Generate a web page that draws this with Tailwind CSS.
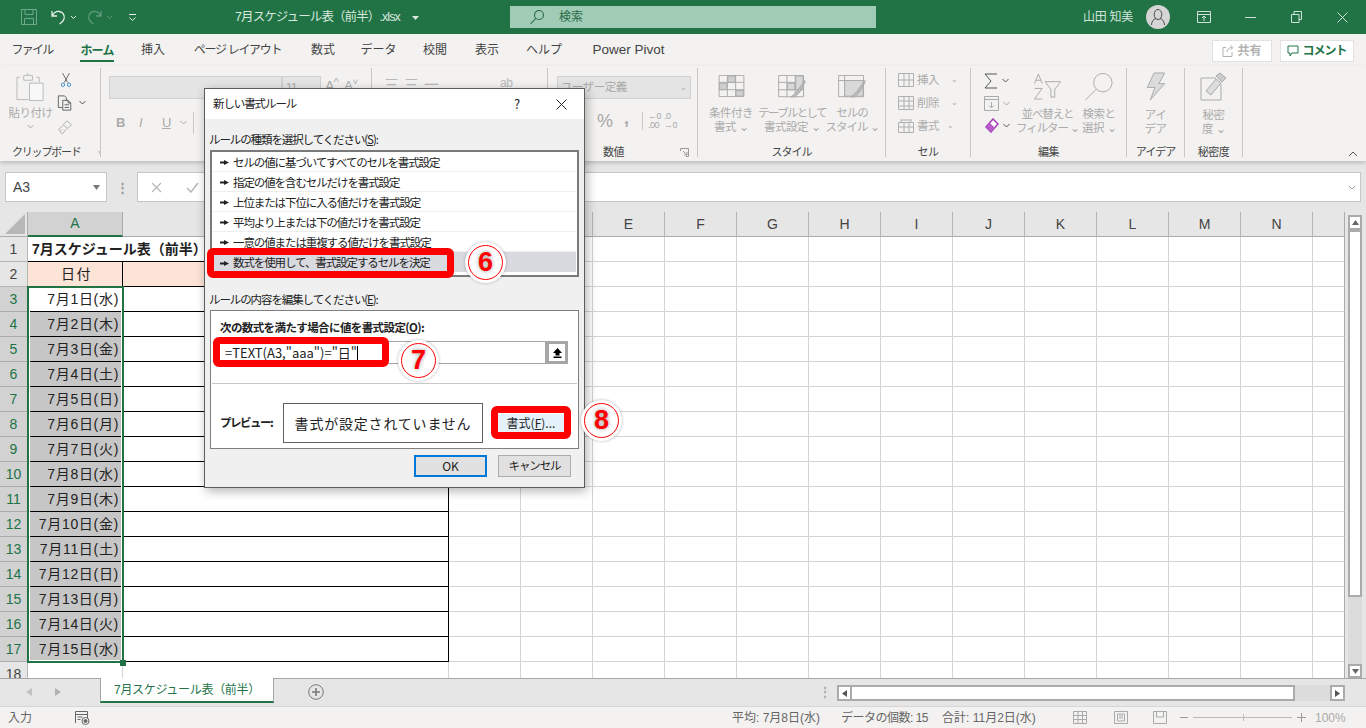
<!DOCTYPE html>
<html lang="ja">
<head>
<meta charset="UTF-8">
<title>7月スケジュール表（前半）.xlsx - Excel</title>
<script src="https://cdn.jsdelivr.net/npm/@tailwindcss/browser@4"></script>
</head>
<body class="w-[1366px] h-[728px] overflow-hidden bg-white text-[12px] text-[#444] font-['Liberation_Sans','Noto_Sans_CJK_JP',sans-serif]">

<div class="relative w-[1366px] h-[728px] flex flex-col overflow-hidden">

  <!-- title bar -->
  <header class="h-[34px] shrink-0 bg-[#217346] flex items-center text-[#cfe3d8]">
    <svg class="ml-[20px] w-[18px] h-[18px] text-[#6fa88a]" viewBox="0 0 18 18" fill="none" stroke="currentColor"><path d="M1.5 1.5h15v15h-15zM5 1.5v5h8v-5M4.5 16.5v-6h9v6"/></svg>
    <svg class="ml-[12px] w-[17px] h-[17px] text-[#e4efe9]" viewBox="0 0 17 17" fill="none" stroke="currentColor" stroke-width="1.3"><path d="M2 2v5h5M2.5 6.5C4 3.500 7 2 9.500 2.500c3.500.7 5.500 4 4.500 7.500-.6 2-2 3.500-4.500 5"/></svg>
    <svg class="ml-[3px] w-[7px] h-[7px] text-[#e4efe9]" viewBox="0 0 7 7" fill="none" stroke="currentColor"><path d="M1 2l2.500 2.500L6 2"/></svg>
    <svg class="ml-[9px] w-[17px] h-[17px] text-[#5f9c7c]" viewBox="0 0 17 17" fill="none" stroke="currentColor" stroke-width="1.3"><path d="M15 2v5h-5M14.500 6.500C13 3.500 10 2 7.500 2.500c-3.500.7-5.500 4-4.500 7.500.6 2 2 3.500 4.500 5"/></svg>
    <svg class="ml-[3px] w-[7px] h-[7px] text-[#5f9c7c]" viewBox="0 0 7 7" fill="none" stroke="currentColor"><path d="M1 2l2.500 2.500L6 2"/></svg>
    <svg class="ml-[15px] w-[9px] h-[9px] text-[#e4efe9]" viewBox="0 0 9 9" fill="none" stroke="currentColor"><path d="M1 1.500h7M1.500 4.500L4.500 7.500l3-3"/></svg>
    <span class="ml-[98px] w-[172px] text-[12.5px] tracking-[-0.9px] whitespace-nowrap text-[#d8e8df]">7月スケジュール表（前半）.xlsx</span>
    <svg class="ml-[5px] w-[7px] h-[7px] text-[#d8e8df]" viewBox="0 0 7 7" fill="currentColor"><path d="M0 2h7L3.500 6z"/></svg>
    <div class="ml-[91px] w-[366px] h-[22px] bg-[#a0cbb4] flex items-center text-[#2a6a49]">
      <svg class="ml-[19px] w-[16px] h-[16px]" viewBox="0 0 16 16" fill="none" stroke="currentColor" stroke-width="1.1"><circle cx="10" cy="6" r="4.500"/><path d="M6.800 9.300L1.500 15"/></svg>
      <span class="ml-[14px] text-[12px]">検索</span>
    </div>
    <span class="ml-[207px] w-[52px] text-[12px] tracking-[-0.3px] whitespace-nowrap">山田 知美</span>
    <div class="ml-[11px] w-[24px] h-[24px] rounded-full bg-[#d5d5d5] flex items-center justify-center overflow-hidden">
      <svg class="w-[18px] h-[18px] text-[#4a4a4a]" viewBox="0 0 18 18" fill="none" stroke="currentColor"><ellipse cx="9" cy="6.500" rx="3.800" ry="5"/><path d="M2.500 17c0-4 2.500-6 4.500-6.500M15.500 17c0-4-2.500-6-4.500-6.500"/></svg>
    </div>
    <svg class="ml-[27px] w-[14px] h-[14px]" viewBox="0 0 14 14" fill="none" stroke="currentColor"><path d="M.5 1.500h13v11H.5zM.5 4.500h13M7 11V6.500M5 8l2-2 2 2"/></svg>
    <span class="ml-[34px] w-[11px] h-px bg-[#cfe3d8]"></span>
    <svg class="ml-[35px] w-[11px] h-[12px]" viewBox="0 0 11 12" fill="none" stroke="currentColor"><path d="M.5 3.500h7.500v8H.5zM3 3.500V.5h7.500v8H8"/></svg>
    <svg class="ml-[35px] w-[11px] h-[11px]" viewBox="0 0 11 11" fill="none" stroke="currentColor"><path d="M.5.500l10 10M10.500.5l-10 10"/></svg>
  </header>

  <!-- ribbon tabs -->
  <nav class="h-[32px] shrink-0 bg-[#f3f2f1] flex items-center text-[12px] text-[#444] whitespace-nowrap">
    <span class="ml-[14px] w-[36px] flex justify-center tracking-[-1.800px]">ファイル</span>
    <span class="ml-[30px] w-[34px] h-[28px] relative flex items-center justify-center font-bold text-[#217346] pt-[2px] tracking-[-0.8px]">ホーム<i class="absolute left-0 right-0 bottom-[2px] h-[2px] bg-[#217346]"></i></span>
    <span class="ml-[26px] w-[26px] flex justify-center">挿入</span>
    <span class="ml-[28px] w-[87px] flex justify-center tracking-[-1.300px]">ページ レイアウト</span>
    <span class="ml-[29px] w-[26px] flex justify-center">数式</span>
    <span class="ml-[26px] w-[33px] flex justify-center">データ</span>
    <span class="ml-[27px] w-[26px] flex justify-center">校閲</span>
    <span class="ml-[26px] w-[26px] flex justify-center">表示</span>
    <span class="ml-[28px] w-[32px] flex justify-center">ヘルプ</span>
    <span class="ml-[31px] w-[75px] flex justify-center text-[13.500px]">Power Pivot</span>
    <div class="ml-[546px] w-[60px] h-[22px] mt-[1px] bg-white border border-[#e2e2e2] flex items-center justify-center gap-[3px] text-[#b4b4b4] font-bold">
      <svg class="w-[12px] h-[13px]" viewBox="0 0 12 13" fill="none" stroke="currentColor"><path d="M4 3.500H1v9h9V8M5 8c0-3 2-4.500 5-4.500M8.500 1l2.500 2.500L8.500 6"/></svg>共有
    </div>
    <div class="ml-[8px] w-[74px] h-[22px] mt-[1px] bg-white border border-[#e2e2e2] flex items-center justify-center gap-[3px] text-[#217346] font-bold">
      <svg class="w-[12px] h-[12px]" viewBox="0 0 12 12" fill="none" stroke="currentColor"><path d="M1 1h10v7H5L3 11V8H1z"/></svg><span class="tracking-[-1px]">コメント</span>
    </div>
  </nav>

  <!-- ribbon groups -->
  <section class="relative z-10 h-[95px] shrink-0 bg-[#f3f2f1] shadow-[0_2px_4px_rgba(0,0,0,0.18)] flex pt-[2px] pb-[4px] text-[#ababab] leading-[14px] text-[11.5px] tracking-[-0.5px]">

    <div class="w-[101px] border-r border-[#c8c8c8] flex flex-col">
      <div class="flex-1 flex">
        <div class="ml-[10px] w-[41px] flex flex-col items-center">
          <svg class="mt-[4px] w-[29px] h-[31px]" viewBox="0 0 30 32" fill="none" stroke="#b9b9b9"><path d="M4 5.500H1v23h12M21 5.500h3v5M8 3.500h9v5H8zM12 1v2"/><path d="M14 11.500h14v18H14z" fill="#f8f8f8"/></svg>
          <span class="mt-[3px] whitespace-nowrap">貼り付け</span>
          <svg class="mt-[4px] w-[7px] h-[6px]" viewBox="0 0 7 6" fill="none" stroke="currentColor"><path d="M.5 1l3 3 3-3"/></svg>
        </div>
        <div class="ml-[6px] flex flex-col items-start">
          <svg class="mt-[4px] ml-[3px] w-[12px] h-[16px]" viewBox="0 0 14 18" fill="none" stroke="#555"><path d="M3 1l6 11M11 1L5 12"/><circle cx="3.500" cy="14.500" r="2" stroke="#2f80c2"/><circle cx="10.500" cy="14.500" r="2" stroke="#2f80c2"/></svg>
          <div class="mt-[7px] flex items-center gap-[6px]">
            <svg class="w-[16px] h-[16px]" viewBox="0 0 17 18" fill="none" stroke="#555"><path d="M1 1h7l2 2v3M1 1v13h4M6 6h6l3 3v8H6zM12 6v3h3M8 11h5M8 14h5"/></svg>
            <svg class="w-[7px] h-[6px]" viewBox="0 0 7 6" fill="none" stroke="#555"><path d="M.5 1l3 3 3-3"/></svg>
          </div>
          <svg class="mt-[9px] w-[16px] h-[15px]" viewBox="0 0 16 16" fill="none" stroke="#b0b0b0"><path d="M10 1l5 4-4 4-5-4zM6 6L1 10l4 5 5-6M3 12l2-2"/></svg>
        </div>
      </div>
      <div class="h-[10px] flex items-center pl-[12px] text-[11px] text-[#444] whitespace-nowrap tracking-[-1.200px]">クリップボード
        <svg class="ml-[17px] w-[9px] h-[9px]" viewBox="0 0 9 9" fill="none" stroke="#777"><path d="M.5 3V.5h8v8H6M3 3l4 4M7 4v3H4"/></svg>
      </div>
    </div>

    <div class="w-[271px] border-r border-[#c8c8c8] pt-[8px]">
      <div class="flex items-start pl-[8px]">
        <div class="w-[173px] h-[23px] bg-[#e4e4e4] border border-[#d0d0d0]"></div>
        <div class="w-[39px] h-[23px] bg-[#e4e4e4] border border-[#d0d0d0] pl-[3px] leading-[20px]">11</div>
        <span class="ml-[4px] text-[14px] leading-[20px]">A<sup>^</sup></span>
        <span class="ml-[6px] text-[13px] leading-[20px]">A<sup>˅</sup></span>
      </div>
      <div class="mt-[13px] flex items-center pl-[15px] font-bold text-[13px]">
        <span class="w-[23px]">B</span><span class="w-[23px] italic font-normal">I</span><span class="w-[18px] underline font-normal">U</span>
        <svg class="w-[7px] h-[6px]" viewBox="0 0 7 6" fill="none" stroke="currentColor"><path d="M.5 1l3 3 3-3"/></svg>
        <span class="ml-[6px] h-[22px] w-px bg-[#c8c8c8]"></span>
      </div>
    </div>

    <div class="w-[176px] border-r border-[#c8c8c8] pt-[8px] flex pl-[12px] gap-[6px] text-[#b8b8b8]">
      <span class="text-[15px] leading-[18px] tracking-[5px]">三三一</span>
      <span class="text-[12px] leading-[14px] ml-[50px]">ab</span>
    </div>

    <div class="w-[150px] border-r border-[#c8c8c8] pt-[8px] pl-[9px] flex flex-col">
      <div class="w-[134px] h-[23px] bg-[#e4e4e4] border border-[#d0d0d0] leading-[21px] pl-[3px] flex justify-between pr-[4px]">ユーザー定義<span class="text-[8px]">⌄</span></div>
      <div class="mt-[10px] flex items-center pl-[40px] text-[18px] leading-[24px] text-[#a8a8a8]">
        <span class="w-[27px]">%</span><span class="w-[18px] font-bold -mt-[6px]">,</span>
        <span class="text-[9px] leading-[9px] w-[22px] border-l border-[#c8c8c8] pl-[5px]">←0<br>.00</span>
        <span class="text-[9px] leading-[9px]">.0<br>→0</span>
      </div>
      <div class="mt-auto h-[10px] flex items-center text-[11px] text-[#444]">
        <span class="ml-[46px]">数値</span>
        <svg class="ml-[56px] w-[9px] h-[9px]" viewBox="0 0 9 9" fill="none" stroke="#999"><path d="M.5 3V.5h8v8H6M3 3l4 4M7 4v3H4"/></svg>
      </div>
    </div>

    <div class="w-[188px] border-r border-[#c8c8c8] flex flex-col">
      <div class="flex-1 flex pl-[4px] text-center">
        <div class="w-[58px] flex flex-col items-center">
          <svg class="mt-[7px] w-[27px] h-[22px]" viewBox="0 0 28 24" fill="none" stroke="#a8a8a8"><path d="M.5.500h27v23H.5z"/><path d="M9.500 0v24M18.500 0v24M0 8h28M0 16h28"/><path d="M10 1h8v7h-8zM1 9h8v7H1zM19 17h8v6h-8z" fill="#d0d0d0"/></svg>
          <span class="mt-[9px] whitespace-nowrap">条件付き</span>
          <span class="whitespace-nowrap">書式 ⌄</span>
        </div>
        <div class="w-[64px] flex flex-col items-center">
          <svg class="mt-[7px] w-[30px] h-[24px]" viewBox="0 0 30 26" fill="none" stroke="#a8a8a8"><path d="M.5.500h27v23H.5z"/><path d="M9.500 0v24M18.500 0v24M0 8h28M0 16h28"/><path d="M19 1h8v15h-8zM10 9h8v7h-8z" fill="#d8d8d8"/><path d="M29 6L20 18l-3 3-3 3c2 0 5-.5 6-2l3-3 6-11z" fill="#bbb"/></svg>
          <span class="mt-[7px] whitespace-nowrap tracking-[-1.700px]">テーブルとして</span>
          <span class="whitespace-nowrap">書式設定 ⌄</span>
        </div>
        <div class="w-[56px] flex flex-col items-center">
          <svg class="mt-[7px] w-[30px] h-[24px]" viewBox="0 0 30 26" fill="none" stroke="#a8a8a8"><path d="M.5.500h27v23H.5zM0 6h28M7 0v24"/><path d="M7 6h20v17H7z" fill="#d8d8d8"/><path d="M29 6L20 18l-3 3-3 3c2 0 5-.5 6-2l3-3 6-11z" fill="#bbb"/></svg>
          <span class="mt-[7px] whitespace-nowrap tracking-[-1px]">セルの</span>
          <span class="whitespace-nowrap tracking-[-1px]">スタイル ⌄</span>
        </div>
      </div>
      <div class="h-[10px] flex items-center justify-center text-[11px] text-[#444] tracking-[-1px]">スタイル</div>
    </div>

    <div class="w-[85px] border-r border-[#c8c8c8] flex flex-col">
      <div class="flex-1 pl-[12px] pt-[4px] flex flex-col gap-[8px]">
        <div class="flex items-center h-[15px]"><svg class="w-[16px] h-[14px]" viewBox="0 0 16 14" fill="none" stroke="#b0b0b0"><path d="M.5.500h15v13H.5zM6 0v14M11 0v14M0 7h16"/></svg><span class="ml-[3px] w-[34px]">挿入</span><span class="text-[8px]">⌄</span></div>
        <div class="flex items-center h-[15px]"><svg class="w-[16px] h-[14px]" viewBox="0 0 16 14" fill="none" stroke="#b0b0b0"><path d="M.5.500h15v13H.5zM0 5h16M0 10h16M6 0v14M11 0v14"/></svg><span class="ml-[3px] w-[34px]">削除</span><span class="text-[8px]">⌄</span></div>
        <div class="flex items-center h-[15px]"><svg class="w-[16px] h-[14px]" viewBox="0 0 16 14" fill="none" stroke="#b0b0b0"><path d="M.5 3.500h15v10H.5zM0 8h16M6 3v11M11 3v11M3 3V.5M13 3V.5M3 1h10"/></svg><span class="ml-[3px] w-[30px]">書式</span><span class="text-[8px]">⌄</span></div>
      </div>
      <div class="h-[10px] flex items-center justify-center text-[11px] text-[#444]">セル</div>
    </div>

    <div class="w-[156px] border-r border-[#c8c8c8] flex flex-col">
      <div class="flex-1 flex">
        <div class="w-[42px] pl-[13px] pt-[5px] flex flex-col gap-[7px]">
          <div class="flex items-center gap-[4px]"><svg class="w-[14px] h-[16px]" viewBox="0 0 14 16" fill="none" stroke="#555"><path d="M13 1H1l6 7-6 7h12"/></svg><svg class="w-[7px] h-[6px]" viewBox="0 0 7 6" fill="none" stroke="#555"><path d="M.5 1l3 3 3-3"/></svg></div>
          <div class="flex items-center gap-[4px]"><svg class="w-[15px] h-[15px]" viewBox="0 0 15 15" fill="none" stroke="#aaa"><path d="M.5.500h14v14H.5zM0 3.500h15M7.500 6v6M5 9.500l2.500 2.500 2.500-2.500"/></svg><svg class="w-[7px] h-[6px]" viewBox="0 0 7 6" fill="none" stroke="#aaa"><path d="M.5 1l3 3 3-3"/></svg></div>
          <div class="flex items-center gap-[4px]"><svg class="w-[15px] h-[15px]" viewBox="0 0 15 15"><path d="M9 1l5 5-7 8-5-5z" fill="#fff" stroke="#a03fb5" stroke-width="1.500"/><path d="M2 9l4-4 5 5-4 4z" fill="#b95cc9"/></svg><svg class="w-[7px] h-[6px]" viewBox="0 0 7 6" fill="none" stroke="#555"><path d="M.5 1l3 3 3-3"/></svg></div>
        </div>
        <div class="w-[69px] flex flex-col items-center">
          <svg class="mt-[5px] w-[30px] h-[27px]" viewBox="0 0 30 28" fill="none" stroke="#aaa"><path d="M1 11L5 1l4 10M2.500 7.500h5M1 16h8L1 27h8M12 9h16l-6 8v8h-4v-8z"/></svg>
          <span class="mt-[7px] whitespace-nowrap tracking-[-1.100px]">並べ替えと</span>
          <span class="whitespace-nowrap tracking-[-1.100px]">フィルター ⌄</span>
        </div>
        <div class="w-[34px] flex flex-col items-center">
          <svg class="mt-[4px] w-[30px] h-[29px] shrink-0" viewBox="0 0 30 30" fill="none" stroke="#aaa"><circle cx="19" cy="11" r="9.500"/><path d="M12 18L1 29"/></svg>
          <span class="mt-[6px] whitespace-nowrap">検索と</span>
          <span class="whitespace-nowrap">選択 ⌄</span>
        </div>
      </div>
      <div class="h-[10px] flex items-center justify-center text-[11px] text-[#444]">編集</div>
    </div>

    <div class="w-[58px] border-r border-[#c8c8c8] flex flex-col items-center">
      <svg class="mt-[4px] w-[22px] h-[29px] shrink-0" viewBox="0 0 22 30" fill="#dcdcdc" stroke="#aaa"><path d="M9 1h11l-6 11h6L5 29l5-13H2z"/></svg>
      <span class="mt-[7px]">アイ</span>
      <span>デア</span>
      <div class="mt-auto h-[10px] flex items-center text-[11px] text-[#444] whitespace-nowrap tracking-[-1px]">アイデア</div>
    </div>

    <div class="w-[58px] border-r border-[#c8c8c8] flex flex-col items-center">
      <svg class="mt-[3px] w-[27px] h-[30px] shrink-0" viewBox="0 0 27 30" fill="none" stroke="#aaa"><path d="M1 7h15M1 7v22h20V13"/><path d="M6 20L16 8l5 4-10 12z" fill="#ddd"/><path d="M16 5l4-3 6 5-4 4z" fill="#ccc"/></svg>
      <span class="mt-[7px]">秘密</span>
      <span>度 ⌄</span>
      <div class="mt-auto h-[10px] flex items-center text-[11px] text-[#444] whitespace-nowrap">秘密度</div>
    </div>

    <div class="flex-1 flex flex-col items-end justify-end pr-[8px]">
      <svg class="w-[10px] h-[6px]" viewBox="0 0 10 6" fill="none" stroke="#555"><path d="M1 5l4-4 4 4"/></svg>
    </div>
  </section>

  <!-- formula bar -->
  <div class="h-[51px] shrink-0 bg-[#e6e6e6] flex items-center pt-[1px] text-[14px]">
    <div class="ml-[5px] w-[102px] h-[30px] bg-white border border-[#c6c6c6] flex items-center justify-between pl-[7px] pr-[6px] text-[#444]">A3
      <svg class="w-[7px] h-[5px]" viewBox="0 0 7 5" fill="#777"><path d="M0 0h7L3.500 5z"/></svg>
    </div>
    <div class="w-[30px] text-center text-[#999] text-[13px] leading-none font-bold">⋮</div>
    <div class="w-[1224px] h-[30px] bg-white border border-[#c6c6c6] flex items-center pl-[13px] pr-[4px]">
      <svg class="w-[11px] h-[11px]" viewBox="0 0 11 11" fill="none" stroke="#b8b8b8" stroke-width="1.300"><path d="M1 1l9 9M10 1l-9 9"/></svg>
      <svg class="ml-[24px] w-[13px] h-[11px]" viewBox="0 0 13 11" fill="none" stroke="#b8b8b8" stroke-width="1.500"><path d="M1 6l4 4 7-9"/></svg>
      <svg class="ml-auto w-[8px] h-[5px]" viewBox="0 0 8 5" fill="none" stroke="#999"><path d="M1 1l3 3 3-3"/></svg>
    </div>
  </div>

  <!-- sheet -->
  <main class="flex-1 relative flex bg-[#e6e6e6] overflow-hidden">
    <div class="relative w-[1345px] h-[466px] overflow-hidden">
      <div id="grid" class="grid grid-cols-[28px_95px_326px_repeat(12,72px)_32px] auto-rows-[25px] bg-white text-[14px] text-[#222]"></div>
      <!-- selection A3:A17 -->
      <div class="absolute left-[27px] top-[74px] w-[97px] h-[377px] border-2 border-[#217346] shadow-[inset_0_0_0_1px_white] pointer-events-none"></div>
      <div class="absolute left-[120px] top-[448px] w-[6px] h-[6px] bg-[#217346]"></div>
    </div>
    <div class="flex-1 flex flex-col items-start pt-[3px] pl-[3px]">
      <div class="w-[14px] h-[15px] bg-white border-2 border-[#ababab] flex items-center justify-center"><svg class="w-[7px] h-[5px]" viewBox="0 0 7 5" fill="#666"><path d="M3.500 0L7 5H0z"/></svg></div>
      <div class="w-[14px] h-[367px] bg-white border-2 border-[#ababab]"></div>
      <div class="w-[14px] h-[67px] bg-[#dcdcdc]"></div>
      <div class="w-[14px] h-[14px] bg-white border-2 border-[#ababab] flex items-center justify-center"><svg class="w-[7px] h-[5px]" viewBox="0 0 7 5" fill="#666"><path d="M0 0h7L3.500 5z"/></svg></div>
    </div>
  </main>

  <!-- sheet tabs -->
  <div class="h-[28px] shrink-0 bg-[#e6e6e6] border-t border-[#a6a6a6] flex items-start relative">
    <svg class="ml-[26px] mt-[9px] w-[6px] h-[8px]" viewBox="0 0 6 8" fill="#c0c0c0"><path d="M6 0v8L0 4z"/></svg>
    <svg class="ml-[23px] mt-[9px] w-[6px] h-[8px]" viewBox="0 0 6 8" fill="#b0b0b0"><path d="M0 0v8l6-4z"/></svg>
    <div class="ml-[39px] -mt-px w-[174px] h-[25px] bg-white border-l border-r border-[#a6a6a6] border-b-[2px] border-b-[#217346] flex items-center justify-center text-[#217346] text-[12px] tracking-[-0.3px] whitespace-nowrap">7月スケジュール表（前半）</div>
    <svg class="ml-[34px] mt-[5px] w-[16px] h-[16px]" viewBox="0 0 16 16" fill="none" stroke="#7a7a7a"><circle cx="8" cy="8" r="7.300"/><path d="M8 4v8M4 8h8" stroke-width="1.600"/></svg>
    <div class="absolute left-[819px] top-[7px] text-[#aaa] text-[12px] leading-[12px] font-bold">⋮</div>
    <div class="absolute left-[837px] top-[6px] w-[508px] h-[16px] flex">
      <div class="w-[15px] bg-white border-2 border-[#ababab] flex items-center justify-center"><svg class="w-[5px] h-[7px]" viewBox="0 0 5 7" fill="#555"><path d="M5 0v7L0 3.500z"/></svg></div>
      <div class="w-[443px] bg-white border-y-2 border-r-2 border-[#ababab]"></div>
      <div class="flex-1 bg-[#dcdcdc]"></div>
      <div class="w-[15px] bg-white border-2 border-[#ababab] flex items-center justify-center"><svg class="w-[5px] h-[7px]" viewBox="0 0 5 7" fill="#555"><path d="M0 0v7l5-3.500z"/></svg></div>
    </div>
  </div>

  <!-- status bar -->
  <footer class="h-[22px] shrink-0 bg-[#f3f2f1] flex items-center text-[12px] text-[#666] whitespace-nowrap border-t border-[#d6d6d6]">
    <span class="ml-[8px] w-[24px]">入力</span>
    <svg class="ml-[43px] w-[15px] h-[14px]" viewBox="0 0 15 14" fill="none" stroke="#666"><path d="M.5 12V.5h12V7M0 3.500h13M2.500 6h5M2.500 8.500h3"/><circle cx="10.500" cy="10" r="3.500"/><circle cx="10.500" cy="10" r="1.500" fill="#666"/></svg>
    <span class="ml-[642px] w-[93px]">平均: 7月8日(水)</span>
    <span class="ml-[16px] w-[85px] tracking-[-0.5px]">データの個数: 15</span>
    <span class="ml-[16px] w-[100px]">合計: 11月2日(水)</span>
    <svg class="ml-[31px] w-[14px] h-[13px]" viewBox="0 0 14 13" fill="none" stroke="#aaa"><path d="M.5.500h13v12H.5zM5 0v13M9.500 0v13M0 4.500h14M0 8.500h14"/></svg>
    <svg class="ml-[27px] w-[14px] h-[13px]" viewBox="0 0 14 13" fill="none" stroke="#aaa"><path d="M.5.500h13v12H.5zM3.500 3h7v7h-7zM5 5h4M5 7h4"/></svg>
    <svg class="ml-[25px] w-[14px] h-[13px]" viewBox="0 0 14 13" fill="none" stroke="#aaa"><path d="M.5.500h13v12H.5zM3.500 0v6h7V0"/></svg>
    <span class="ml-[13px] w-[8px] h-px bg-[#999]"></span>
    <div class="ml-[5px] w-[99px] h-px bg-[#bbb] relative"><i class="absolute left-[50px] -top-[3px] w-px h-[7px] bg-[#bbb]"></i></div>
    <svg class="ml-[5px] w-[9px] h-[9px]" viewBox="0 0 9 9" stroke="#999"><path d="M4.500 0v9M0 4.500h9"/></svg>
    <span class="ml-[9px] text-[#aaa]">100%</span>
  </footer>

  <!-- conditional format dialog -->
  <div class="absolute z-20 left-[204px] top-[88px] w-[381px] h-[400px] bg-[#f0f0f0] border border-[#5c5c5c] shadow-[2px_3px_10px_rgba(0,0,0,0.3)] text-[#222] text-[11.5px] tracking-[-1.100px] font-['Noto_Sans_CJK_JP','Liberation_Sans',sans-serif]">
    <div class="h-[30px] bg-white flex items-center pl-[8px] pr-[17px]">
      <span>新しい書式ルール</span>
      <span class="ml-auto mr-[5px] text-[13px]">?</span>
      <svg class="ml-[32px] w-[11px] h-[11px]" viewBox="0 0 11 11" fill="none" stroke="#222"><path d="M.5.500l10 10M10.500.5l-10 10"/></svg>
    </div>

    <div class="px-[5px]">
      <p class="mt-[11px] h-[18px] leading-[18px] -ml-[1px]">ルールの種類を選択してください(<u>S</u>):</p>
      <ul class="mt-[2px] h-[127px] bg-white border-2 border-[#7a7a7a] px-[1px]">
        <li class="h-[20px] flex items-center pl-[7px] pt-[2px] gap-[4px] border-b border-[#eeeeee]"><svg class="w-[9px] h-[5px]" viewBox="0 0 9 5" fill="#222"><path d="M0 1.500h4V0l5 2.500L4 5V3.500H0z"/></svg>セルの値に基づいてすべてのセルを書式設定</li>
        <li class="h-[20px] flex items-center pl-[7px] pt-[2px] gap-[4px] border-b border-[#eeeeee]"><svg class="w-[9px] h-[5px]" viewBox="0 0 9 5" fill="#222"><path d="M0 1.500h4V0l5 2.500L4 5V3.500H0z"/></svg>指定の値を含むセルだけを書式設定</li>
        <li class="h-[20px] flex items-center pl-[7px] pt-[2px] gap-[4px] border-b border-[#eeeeee]"><svg class="w-[9px] h-[5px]" viewBox="0 0 9 5" fill="#222"><path d="M0 1.500h4V0l5 2.500L4 5V3.500H0z"/></svg>上位または下位に入る値だけを書式設定</li>
        <li class="h-[20px] flex items-center pl-[7px] pt-[2px] gap-[4px] border-b border-[#eeeeee]"><svg class="w-[9px] h-[5px]" viewBox="0 0 9 5" fill="#222"><path d="M0 1.500h4V0l5 2.500L4 5V3.500H0z"/></svg>平均より上または下の値だけを書式設定</li>
        <li class="h-[20px] flex items-center pl-[7px] pt-[2px] gap-[4px] border-b border-[#eeeeee]"><svg class="w-[9px] h-[5px]" viewBox="0 0 9 5" fill="#222"><path d="M0 1.500h4V0l5 2.500L4 5V3.500H0z"/></svg>一意の値または重複する値だけを書式設定</li>
        <li class="h-[20px] flex items-center pl-[7px] pt-[2px] gap-[4px] bg-[#d9d9e0]"><svg class="w-[9px] h-[5px]" viewBox="0 0 9 5" fill="#222"><path d="M0 1.500h4V0l5 2.500L4 5V3.500H0z"/></svg>数式を使用して、書式設定するセルを決定</li>
      </ul>

      <p class="mt-[13px] h-[18px] leading-[18px] -ml-[1px]">ルールの内容を編集してください(<u>E</u>):</p>
      <div class="mt-[2px] h-[139px] bg-white border border-[#7f7f7f] pt-[6px]">
        <p class="pl-[9px] h-[20px] leading-[20px] font-bold tracking-[-0.6px]">次の数式を満たす場合に値を書式設定(<u>O</u>):</p>
        <div class="mt-[4px] ml-[3px] mr-[10px] h-[23px] flex">
          <div class="flex-1 bg-white border border-[#a6a6a6] pl-[10px] leading-[21px] text-[13px] tracking-normal whitespace-nowrap">=TEXT(A3,"aaa")="日"<span class="inline-block w-px h-[14px] bg-black align-[-2px]"></span></div>
          <div class="w-[22px] bg-white border-[3px] border-[#a6a6a6] flex items-center justify-center"><svg class="w-[11px] h-[11px]" viewBox="0 0 11 11" fill="#000"><path d="M5.500 1L10 6H7.500v2.500h-4V6H1zM1.500 9.500h8V11h-8z"/></svg></div>
        </div>
        <div class="mt-[19px] mx-px h-px bg-[#c8c8c8]"></div>
        <div class="mt-[19px] flex items-center">
          <span class="pl-[9px] w-[72px] font-bold tracking-[-1.500px] whitespace-nowrap">プレビュー:</span>
          <div class="w-[200px] h-[40px] bg-white border border-[#606060] flex items-center justify-center text-[14px] tracking-[0.800px] whitespace-nowrap">書式が設定されていません</div>
          <div class="ml-[15px] w-[66px] h-[18px] bg-[#e5f1fb] flex items-center justify-center whitespace-nowrap text-[12px] tracking-normal">書式(<u>F</u>)...</div>
        </div>
      </div>
      <div class="mt-[6px] flex justify-end pr-[8px] gap-[11px] tracking-normal">
        <div class="w-[73px] h-[22px] bg-[#e1e1e1] border-2 border-[#0078d7] flex items-center justify-center text-[12px]">OK</div>
        <div class="w-[73px] h-[22px] bg-[#e1e1e1] border border-[#adadad] flex items-center justify-center tracking-[-1.100px]">キャンセル</div>
      </div>
    </div>

    <!-- red callouts -->
    <div class="absolute left-[2px] top-[159px] w-[247px] h-[30px] border-[7px] border-[#ff0000] rounded-[6px]"></div>
    <div class="absolute left-[260px] top-[153px] w-[41px] h-[41px] rounded-full bg-white shadow-[0_0_3px_rgba(0,0,0,0.3)] flex items-center justify-center"><div class="w-[35px] h-[35px] rounded-full border border-[#ff0000] flex items-center justify-center text-[#ff0000] font-bold text-[27px] tracking-normal [text-shadow:0_0_4px_rgba(0,0,0,0.4)] font-['Liberation_Sans',sans-serif]">6</div></div>
    <div class="absolute left-[8px] top-[248px] w-[176px] h-[30px] border-[7px] border-[#ff0000] rounded-[6px]"></div>
    <div class="absolute left-[193px] top-[251px] w-[41px] h-[41px] rounded-full bg-white shadow-[0_0_3px_rgba(0,0,0,0.3)] flex items-center justify-center"><div class="w-[35px] h-[35px] rounded-full border border-[#ff0000] flex items-center justify-center text-[#ff0000] font-bold text-[27px] tracking-normal [text-shadow:0_0_4px_rgba(0,0,0,0.4)] font-['Liberation_Sans',sans-serif]">7</div></div>
    <div class="absolute left-[286px] top-[317px] w-[80px] h-[33px] border-[7px] border-[#ff0000] rounded-[6px]"></div>
    <div class="absolute left-[376px] top-[311px] w-[41px] h-[41px] rounded-full bg-white shadow-[0_0_3px_rgba(0,0,0,0.3)] flex items-center justify-center"><div class="w-[35px] h-[35px] rounded-full border border-[#ff0000] flex items-center justify-center text-[#ff0000] font-bold text-[27px] tracking-normal [text-shadow:0_0_4px_rgba(0,0,0,0.4)] font-['Liberation_Sans',sans-serif]">8</div></div>
  </div>
</div>

<script>
  const dias = ['水','木','金','土','日','月','火'];
  const columnas = ['A','B','C','D','E','F','G','H','I','J','K','L','M','N',''];
  const grid = document.getElementById('grid');
  let html = '<div class="bg-[#e6e6e6] border-r border-b border-[#ababab] flex items-end justify-end p-[2px]"><svg class="w-[20px] h-[20px]" viewBox="0 0 20 20" fill="#b8b8b8"><path d="M20 0v20H0z"/></svg></div>';

  columnas.forEach((letra, i) => {
    let clase = 'bg-[#e6e6e6] border-b border-b-[#ababab] border-r border-r-[#b5b5b5] text-[#444]';
    if (i === 0) clase = 'bg-[#d2d2d2] border-b-2 border-b-[#217346] border-r border-r-[#ababab] text-[#217346]';
    if (i === 14) clase = 'bg-[#e6e6e6] border-b border-b-[#ababab] border-r border-r-[#ababab]';
    html += `<div class="${clase} flex items-center justify-center">${letra}</div>`;
  });

  for (let fila = 1; fila <= 18; fila++) {
    const activa = fila >= 3 && fila <= 17;
    const claseFila = activa
      ? 'bg-[#d2d2d2] text-[#217346] border-[#ababab]'
      : 'bg-[#e6e6e6] text-[#444] border-[#b5b5b5]';
    html += `<div class="${claseFila} border-r border-b flex items-center justify-center">${fila}</div>`;

    for (let col = 0; col < 15; col++) {
      let clase = 'border-r border-b border-[#d4d4d4]';
      let texto = '';
      if (col === 14) {
        clase = 'border-b border-b-[#d4d4d4] border-r border-r-[#ababab]';
      } else if (fila === 1 && col === 0) {
        clase = 'border-b border-b-black font-bold whitespace-nowrap pl-[4px] flex items-center overflow-visible';
        texto = '7月スケジュール表（前半）';
      } else if (fila === 1 && col === 1) {
        clase = 'border-r border-[#d4d4d4] border-b border-b-black';
      } else if (fila === 2 && col < 2) {
        clase = 'bg-[#fce4d6] border-r border-b border-black flex items-center justify-center pl-[3px] tracking-[1.500px]';
        if (col === 0) texto = '日付';
      } else if (activa && col === 0) {
        const dia = fila - 2;
        clase = (fila === 3 ? '' : 'bg-[#c6c6c6] ') + 'border-r border-b border-black flex items-center justify-end pr-[3px] whitespace-nowrap tracking-[0.700px]';
        texto = `7月${dia}日(${dias[(dia - 1) % 7]})`;
      } else if (activa && col === 1) {
        clase = 'border-r border-b border-black';
      }
      html += `<div class="${clase}">${texto}</div>`;
    }
  }
  grid.innerHTML = html;
</script>
</body>
</html>
